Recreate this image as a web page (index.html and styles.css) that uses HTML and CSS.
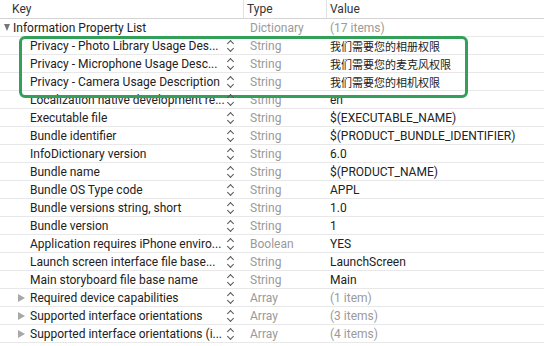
FILE: index.html
```html
<!DOCTYPE html>
<html lang="en">
<head>
  <meta charset="UTF-8" />
  <title>Info.plist</title>
  <link rel="stylesheet" href="styles.css">
</head>
<body>
  <div class="plist">
    <div class="head">
      <div class="hcell">Key</div>
      <div class="hcell">Type</div>
      <div class="hcell">Value</div>
    </div>

    <div class="row">
      <div class="key lvl0"><span class="tri down"></span><span class="name">Information Property List</span></div>
      <div class="type">Dictionary</div>
      <div class="value dim">(17 items)</div>
    </div>

    <!-- privacy keys, boxed in green -->
    <div class="group">
      <div class="row">
        <div class="key"><span class="name">Privacy - Photo Library Usage Des...</span><span class="step"></span></div>
        <div class="type">String</div>
        <div class="value cjk">我们需要您的相册权限</div>
      </div>
      <div class="row">
        <div class="key"><span class="name">Privacy - Microphone Usage Desc...</span><span class="step"></span></div>
        <div class="type">String</div>
        <div class="value cjk">我们需要您的麦克风权限</div>
      </div>
      <div class="row">
        <div class="key"><span class="name">Privacy - Camera Usage Description</span><span class="step"></span></div>
        <div class="type">String</div>
        <div class="value cjk">我们需要您的相机权限</div>
      </div>
      <div class="mark"></div>
    </div>

    <div class="row">
      <div class="key"><span class="name">Localization native development re...</span><span class="step"></span></div>
      <div class="type">String</div>
      <div class="value">en</div>
    </div>
    <div class="row">
      <div class="key"><span class="name">Executable file</span><span class="step"></span></div>
      <div class="type">String</div>
      <div class="value">$(EXECUTABLE_NAME)</div>
    </div>
    <div class="row">
      <div class="key"><span class="name">Bundle identifier</span><span class="step"></span></div>
      <div class="type">String</div>
      <div class="value">$(PRODUCT_BUNDLE_IDENTIFIER)</div>
    </div>
    <div class="row">
      <div class="key"><span class="name">InfoDictionary version</span><span class="step"></span></div>
      <div class="type">String</div>
      <div class="value">6.0</div>
    </div>
    <div class="row">
      <div class="key"><span class="name">Bundle name</span><span class="step"></span></div>
      <div class="type">String</div>
      <div class="value">$(PRODUCT_NAME)</div>
    </div>
    <div class="row">
      <div class="key"><span class="name">Bundle OS Type code</span><span class="step"></span></div>
      <div class="type">String</div>
      <div class="value">APPL</div>
    </div>
    <div class="row">
      <div class="key"><span class="name">Bundle versions string, short</span><span class="step"></span></div>
      <div class="type">String</div>
      <div class="value">1.0</div>
    </div>
    <div class="row">
      <div class="key"><span class="name">Bundle version</span><span class="step"></span></div>
      <div class="type">String</div>
      <div class="value">1</div>
    </div>
    <div class="row">
      <div class="key"><span class="name">Application requires iPhone enviro...</span><span class="step"></span></div>
      <div class="type">Boolean</div>
      <div class="value">YES</div>
    </div>
    <div class="row">
      <div class="key"><span class="name">Launch screen interface file base...</span><span class="step"></span></div>
      <div class="type">String</div>
      <div class="value">LaunchScreen</div>
    </div>
    <div class="row">
      <div class="key"><span class="name">Main storyboard file base name</span><span class="step"></span></div>
      <div class="type">String</div>
      <div class="value">Main</div>
    </div>
    <div class="row">
      <div class="key lvl1"><span class="tri"></span><span class="name">Required device capabilities</span><span class="step"></span></div>
      <div class="type">Array</div>
      <div class="value dim">(1 item)</div>
    </div>
    <div class="row">
      <div class="key lvl1"><span class="tri"></span><span class="name">Supported interface orientations</span><span class="step"></span></div>
      <div class="type">Array</div>
      <div class="value dim">(3 items)</div>
    </div>
    <div class="row">
      <div class="key lvl1"><span class="tri"></span><span class="name">Supported interface orientations (i...</span><span class="step"></span></div>
      <div class="type">Array</div>
      <div class="value dim">(4 items)</div>
    </div>
  </div>
</body>
</html>
```

FILE: styles.css
```css
body {
  margin: 0;
  background: #fff;
  font-family: Roboto, "Liberation Sans", "Noto Sans CJK SC", sans-serif;
  font-size: 12px;
  color: #222;
}

.plist {
  width: 544px;
}

.head,
.row {
  display: grid;
  grid-template-columns: 243px 83px 1fr;
}

.head {
  height: 18px;
  border-bottom: 1px solid #d4d4d4;
}

.hcell {
  display: flex;
  align-items: center;
  padding-left: 12px;
  color: #333;
}

.hcell + .hcell {
  border-left: 1px solid #e2e2e2;
  padding-left: 3px;
}

.row {
  height: 17px;
  border-bottom: 1px solid #e8e8e8;
}

.key,
.type,
.value {
  display: flex;
  align-items: center;
  white-space: nowrap;
  overflow: hidden;
}

.key {
  padding-left: 30px;
  padding-right: 9px;
}

.key.lvl0 {
  padding-left: 4px;
}

.key.lvl1 {
  padding-left: 18px;
}

.name {
  flex: 1;
}

/* disclosure triangles */
.tri {
  width: 0;
  height: 0;
  border-top: 4px solid transparent;
  border-bottom: 4px solid transparent;
  border-left: 7px solid #a8a8a8;
  margin-right: 5px;
}

.tri.down {
  border-left: 3.5px solid transparent;
  border-right: 3.5px solid transparent;
  border-top: 7px solid #777;
  border-bottom: 0;
  margin-right: 3px;
}

.step {
  width: 8px;
  height: 14px;
  position: relative;
}

.step::before,
.step::after {
  content: "";
  position: absolute;
  left: 2px;
  width: 4px;
  height: 4px;
  border-left: 1px solid #555;
  border-top: 1px solid #555;
}

.step::before {
  top: 2px;
  transform: rotate(45deg);
}

.step::after {
  top: 7px;
  transform: rotate(225deg);
}

.type {
  padding-left: 7px;
  color: #9a9a9a;
}

.value {
  padding-left: 4px;
}

.value.dim {
  color: #9a9a9a;
}

.value.cjk {
  font-family: "Noto Sans CJK SC", sans-serif;
  font-size: 11px;
}

.group {
  position: relative;
}

.mark {
  position: absolute;
  left: 19px;
  top: -1px;
  width: 443px;
  height: 56px;
  border: 3px solid #33a05a;
  border-radius: 6px;
}
```
